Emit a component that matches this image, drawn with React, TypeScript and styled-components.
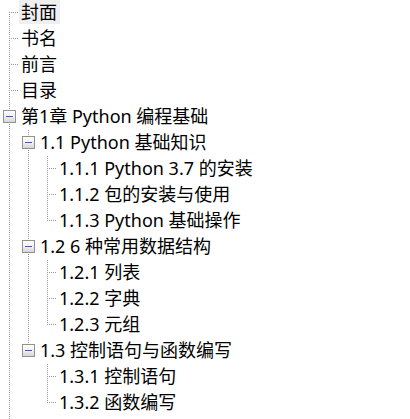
import React from 'react';
import styled, { createGlobalStyle } from 'styled-components';

const GlobalStyle = createGlobalStyle`
  html, body {
    margin: 0;
    padding: 0;
    background: #ffffff;
    overflow: hidden;
  }
  body {
    font-family: "Noto Sans", "Noto Sans CJK SC", sans-serif;
  }
`;

type Node = { label: string; selected?: boolean; children?: Node[] };

const tree: Node[] = [
  { label: '封面', selected: true },
  { label: '书名' },
  { label: '前言' },
  { label: '目录' },
  {
    label: '第1章 Python 编程基础',
    children: [
      {
        label: '1.1 Python 基础知识',
        children: [
          { label: '1.1.1 Python 3.7 的安装' },
          { label: '1.1.2 包的安装与使用' },
          { label: '1.1.3 Python 基础操作' },
        ],
      },
      {
        label: '1.2 6 种常用数据结构',
        children: [
          { label: '1.2.1 列表' },
          { label: '1.2.2 字典' },
          { label: '1.2.3 元组' },
        ],
      },
      {
        label: '1.3 控制语句与函数编写',
        children: [{ label: '1.3.1 控制语句' }, { label: '1.3.2 函数编写' }],
      },
    ],
  },
  {
    label: '第2章 Python 数据分析工具',
    children: [{ label: '2.1 NumPy 数值计算' }, { label: '2.2 pandas 数据处理' }],
  },
  { label: '第3章 数据预处理' },
];

type Flat = {
  key: string;
  label: string;
  selected: boolean;
  guides: boolean[];
  isLast: boolean;
  isFirstRoot: boolean;
  hasChildren: boolean;
};

function flatten(nodes: Node[], guides: boolean[], prefix: string, out: Flat[]) {
  nodes.forEach((n, i) => {
    const isLast = i === nodes.length - 1;
    out.push({
      key: prefix + i,
      label: n.label,
      selected: !!n.selected,
      guides,
      isLast,
      isFirstRoot: guides.length === 0 && i === 0,
      hasChildren: !!n.children && n.children.length > 0,
    });
    if (n.children) flatten(n.children, [...guides, !isLast], prefix + i + '-', out);
  });
  return out;
}

const DOT = '#999999';

const Tree = styled.div`
  display: flex;
  flex-direction: column;
  color: #000000;
  font-size: 18px;
`;

const Row = styled.div`
  display: flex;
  align-items: flex-start;
  height: 26px;
  white-space: nowrap;
`;

const Guide = styled.div<{ $line: boolean }>`
  position: relative;
  flex: 0 0 19px;
  height: 26px;
  &::before {
    content: '';
    display: ${(p) => (p.$line ? 'block' : 'none')};
    position: absolute;
    left: 9px;
    top: 0;
    width: 1px;
    height: 26px;
    background: repeating-linear-gradient(to bottom, ${DOT} 0 1px, transparent 1px 2px);
  }
`;

const Connector = styled.div<{ $first: boolean; $last: boolean; $box: boolean }>`
  position: relative;
  flex: 0 0 19px;
  height: 26px;
  &::before {
    content: '';
    position: absolute;
    left: 9px;
    top: ${(p) => (p.$first ? '12px' : '0')};
    width: 1px;
    height: ${(p) => (p.$first ? '14px' : p.$last ? '13px' : '26px')};
    background: repeating-linear-gradient(to bottom, ${DOT} 0 1px, transparent 1px 2px);
  }
  &::after {
    content: '';
    display: ${(p) => (p.$box ? 'none' : 'block')};
    position: absolute;
    left: 10px;
    top: 12px;
    width: 9px;
    height: 1px;
    background: repeating-linear-gradient(to right, transparent 0 1px, ${DOT} 1px 2px);
  }
`;

const ExpandBox = styled.div`
  position: relative;
  z-index: 1;
  box-sizing: border-box;
  width: 13px;
  height: 13px;
  margin: 6px 0 0 3px;
  border: 1px solid #919191;
  background: linear-gradient(to bottom, #ffffff 0%, #f2f2f2 45%, #d6d6d6 100%);
  display: flex;
  align-items: center;
  justify-content: center;
`;

const Minus = styled.span`
  display: block;
  width: 7px;
  height: 1px;
  background: #3b5ea6;
`;

const Label = styled.span<{ $selected: boolean }>`
  display: block;
  height: 24px;
  line-height: 24px;
  padding: 0 3px 0 2px;
  background: ${(p) => (p.$selected ? '#efefef' : 'transparent')};
`;

export default function App() {
  const rows = flatten(tree, [], '', []);
  return (
    <>
      <GlobalStyle />
      <Tree>
        {rows.map((r) => (
          <Row key={r.key}>
            {r.guides.map((g, i) => (
              <Guide key={i} $line={g} />
            ))}
            <Connector $first={r.isFirstRoot} $last={r.isLast} $box={r.hasChildren}>
              {r.hasChildren && (
                <ExpandBox>
                  <Minus />
                </ExpandBox>
              )}
            </Connector>
            <Label $selected={r.selected}>{r.label}</Label>
          </Row>
        ))}
      </Tree>
    </>
  );
}
